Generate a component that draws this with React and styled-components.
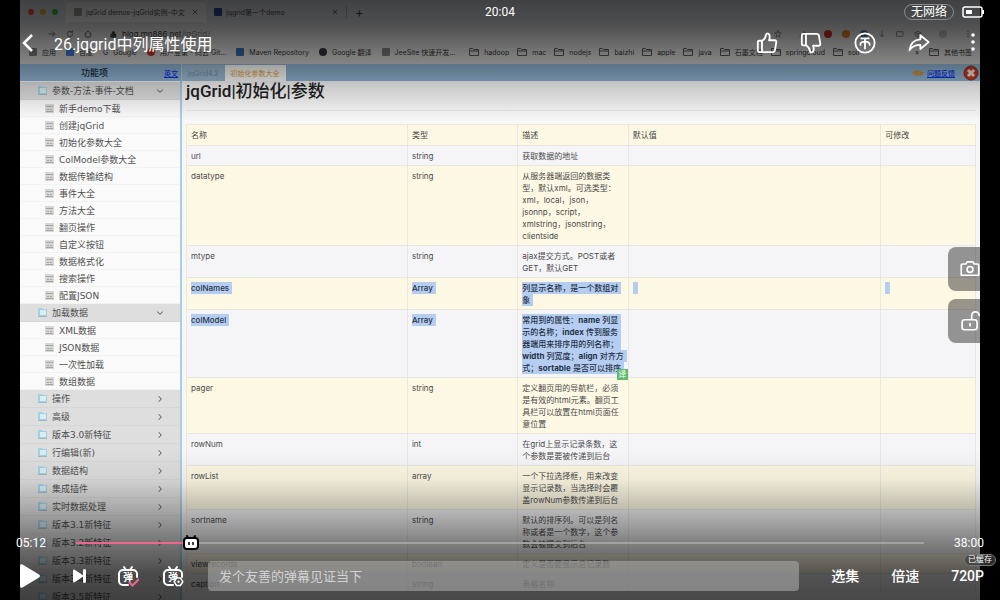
import React, { useState } from 'react';
import styled, { createGlobalStyle, css } from 'styled-components';

const GlobalStyle = createGlobalStyle`
  * {
    box-sizing: border-box;
  }
  body {
    margin: 0;
    background: #000;
    font-family: Inter, 'Noto Sans CJK SC', sans-serif;
  }
  button {
    padding: 0;
    border: 0;
    background: none;
    color: inherit;
    font: inherit;
    cursor: pointer;
  }
  a {
    color: inherit;
    text-decoration: none;
  }
  svg {
    display: block;
    flex: none;
  }
`;

const Player = styled.div`
  position: relative;
  height: 100vh;
  overflow: hidden;
  background: #000;
`;

const Video = styled.div`
  display: flex;
  flex-direction: column;
  height: 100%;
  margin: 0 20px;
  overflow: hidden;
  background: #f7f7f8;
`;

/* browser window inside the video */

const TabStrip = styled.div`
  display: flex;
  flex: none;
  align-items: center;
  height: 24px;
  padding-left: 8px;
  background: #c2c4c8;
  color: #444;
  font-size: 7px;
`;

const Lights = styled.div`
  display: flex;
  gap: 6px;
  margin-right: 8px;
`;

const Light = styled.span`
  width: 6px;
  height: 6px;
  border-radius: 50%;
  background: ${({ color }) => color};
`;

const BrowserTab = styled.div`
  display: flex;
  align-items: center;
  gap: 4px;
  width: 140px;
  height: 20px;
  padding: 0 8px;
  border-radius: 4px 4px 0 0;
  white-space: nowrap;
  ${({ $active }) =>
    $active &&
    css`
      background: #d4d4d5;
    `}
`;

const TabTitle = styled.span`
  flex: 1;
  overflow: hidden;
`;

const Favicon = styled.span`
  width: 8px;
  height: 8px;
  border-radius: ${({ $round }) => ($round ? '50%' : '1px')};
  background: ${({ color }) => color};
`;

const NewTab = styled.button`
  padding: 0 8px;
  border-left: 1px solid #999;
  font-size: 13px;
  line-height: 12px;
`;

const AddressBar = styled.div`
  display: flex;
  flex: none;
  align-items: center;
  height: 20px;
  padding: 0 8px 0 28px;
  background: linear-gradient(#c6c6c6, #d2d2d2);
  color: #333;
  font-size: 8px;
`;

const NavIcons = styled.div`
  display: flex;
  align-items: center;
  gap: 10px;
  margin-right: 18px;
  color: #666;
`;

const Url = styled.span`
  flex: 1;
  margin-left: 5px;
  span {
    color: #777;
  }
`;

const Extensions = styled.div`
  display: flex;
  align-items: center;
  gap: ${({ $wide }) => ($wide ? '17px' : '10px')};
  color: #555;
`;

const Bookmarks = styled.div`
  display: flex;
  flex: none;
  align-items: center;
  gap: 10px;
  height: 20px;
  padding: 0 8px 4px 9px;
  background: #d2d2d2;
  color: #333;
  font-size: 7px;
  white-space: nowrap;
`;

const Bookmark = styled.span`
  display: flex;
  align-items: center;
  gap: 5px;
`;

const Folders = styled.div`
  display: flex;
  flex: 1;
  gap: 8px;
  padding-left: 4px;
`;

/* documentation page */

const AppHeader = styled.div`
  display: flex;
  flex: none;
  align-items: flex-end;
  height: 17px;
  background: #90b4d4;
  font-size: 7px;
`;

const MenuTitle = styled.div`
  display: flex;
  align-items: center;
  justify-content: flex-end;
  gap: 56px;
  width: 162px;
  height: 17px;
  padding-right: 3px;
  border-right: 1px solid #b5d3e8;
  color: #1a2c3c;
  font-size: 9px;
  font-weight: 500;
`;

const HeaderLink = styled.a`
  color: #0a32e8;
  font-size: 7px;
  font-weight: 500;
  text-decoration: underline;
`;

const PageTab = styled.button`
  height: 16px;
  padding: 0 6px;
  background: ${({ $active }) => ($active ? '#fdfdfb' : '#9dbcd6')};
  color: ${({ $active }) => ($active ? '#dfa13c' : '#6f8ea8')};
  font-size: 7px;
`;

const Feedback = styled.div`
  display: flex;
  align-items: center;
  gap: 3px;
  height: 17px;
  margin-left: auto;
`;

const PageBody = styled.div`
  display: flex;
  flex: 1;
  min-height: 0;
`;

const Sidebar = styled.nav`
  flex: none;
  width: 162px;
  padding-top: 1px;
  border-right: 2px solid #a9cfe2;
  background: #fafafa;
  color: #505050;
  font-family: 'DejaVu Sans', 'Noto Sans CJK SC', sans-serif;
  font-size: 9px;
`;

const GroupHead = styled.button`
  display: flex;
  align-items: center;
  gap: 5px;
  width: 100%;
  height: 18px;
  padding: 0 17px 0 18px;
  border-bottom: 1px solid #d6d6d6;
  background: #dedede;
  text-align: left;
  span {
    flex: 1;
  }
`;

const MenuItem = styled.a`
  display: flex;
  align-items: center;
  gap: 5px;
  height: 17px;
  padding-left: 25px;
  border-bottom: 1px solid #f2f2f2;
`;

const Content = styled.main`
  flex: 1;
  min-width: 0;
  padding: 0 4px;
  overflow: hidden;
`;

const Heading = styled.h1`
  margin: 0;
  height: 30px;
  border-bottom: 1px solid #e6eaea;
  color: #222;
  font-family: Roboto, 'Noto Sans CJK SC', sans-serif;
  font-size: 17px;
  font-weight: 500;
  line-height: 20px;
`;

const Table = styled.table`
  width: 100%;
  margin-top: 13px;
  border-collapse: separate;
  border-spacing: 0;
  border-left: 1px solid #ece9dc;
  border-top: 1px solid #ece9dc;
  table-layout: fixed;
  color: #4a4a4a;
  font-size: 8px;
  line-height: 12px;
`;

const HeadCell = styled.th`
  width: ${({ width }) => width};
  padding: 4px;
  border-right: 1px solid #e9e7e0;
  color: #444;
  font-weight: 400;
  text-align: left;
`;

const Row = styled.tr`
  background: ${({ $odd }) => ($odd ? '#fdf8e3' : '#f5f5f7')};
`;

const Cell = styled.td`
  position: relative;
  padding: 4px 4px 3px;
  border-top: 1px solid #e9e7e0;
  border-right: 1px solid #e9e7e0;
  vertical-align: top;
  white-space: pre;
`;

const Selected = styled.mark`
  padding: 1px 3px 1px 0;
  background: #b5cdf0;
  color: #263248;
  font-weight: 500;
  -webkit-box-decoration-break: clone;
  box-decoration-break: clone;
`;

const Translate = styled.button`
  position: absolute;
  right: 0;
  bottom: -3px;
  z-index: 1;
  width: 11px;
  height: 11px;
  background: #5dbb6c;
  color: #fff;
  font-size: 8px;
  line-height: 11px;
`;

/* player controls */

const Shade = styled.div`
  position: absolute;
  left: 0;
  right: 0;
  pointer-events: none;
  ${({ $side }) =>
    $side === 'top'
      ? css`
          top: 0;
          height: 120px;
          background: linear-gradient(
            rgba(0, 0, 0, 0.67),
            rgba(0, 0, 0, 0.58) 25%,
            rgba(0, 0, 0, 0.36) 54%,
            rgba(0, 0, 0, 0.18) 72%,
            transparent
          );
        `
      : css`
          bottom: 0;
          height: 150px;
          background: linear-gradient(
            transparent,
            rgba(0, 0, 0, 0.06) 20%,
            rgba(0, 0, 0, 0.25) 40%,
            rgba(0, 0, 0, 0.48) 62%,
            rgba(0, 0, 0, 0.66) 82%,
            rgba(0, 0, 0, 0.71)
          );
        `}
`;

const TopControls = styled.header`
  position: absolute;
  top: 0;
  left: 0;
  right: 0;
  padding: 0 16px;
  color: #fff;
  font-family: Roboto, 'Noto Sans CJK SC', sans-serif;
`;

const StatusBar = styled.div`
  display: grid;
  grid-template-columns: 1fr auto 1fr;
  align-items: center;
  height: 24px;
  font-size: 12px;
`;

const StatusRight = styled.div`
  display: flex;
  align-items: center;
  justify-content: flex-end;
  gap: 8px;
`;

const NetworkPill = styled.span`
  height: 16px;
  padding: 0 6px;
  border: 1px solid #8a8a8a;
  border-radius: 8px;
  line-height: 14px;
`;

const TitleBar = styled.div`
  display: flex;
  align-items: center;
  height: 38px;
  padding-left: 6px;
`;

const VideoTitle = styled.h2`
  flex: 1;
  margin: 0 0 0 20px;
  font-size: 16px;
  font-weight: 400;
`;

const Actions = styled.div`
  display: flex;
  gap: ${({ gap }) => gap};
`;

const SideControls = styled.div`
  position: absolute;
  top: calc(50% - 53px);
  right: 8px;
  display: flex;
  flex-direction: column;
  gap: 8px;
`;

const SideButton = styled.button`
  display: flex;
  align-items: center;
  justify-content: center;
  width: 44px;
  height: 44px;
  border-radius: 8px;
  background: rgba(0, 0, 0, 0.4);
  color: #fff;
`;

const BottomControls = styled.footer`
  position: absolute;
  left: 0;
  right: 0;
  bottom: 0;
  display: flex;
  flex-direction: column;
  gap: 9px;
  padding: 0 16px 9px;
  color: #fff;
  font-family: Roboto, 'Noto Sans CJK SC', sans-serif;
`;

const ProgressRow = styled.div`
  display: flex;
  align-items: center;
  gap: 30px;
  height: 18px;
  font-size: 12px;
`;

const Seek = styled.div`
  position: relative;
  flex: 1;
  height: 18px;
`;

const Range = styled.input`
  display: block;
  width: 100%;
  height: 18px;
  margin: 0;
  appearance: none;
  background: linear-gradient(#ee6590, #ee6590) left center no-repeat,
    linear-gradient(#a2a2a4, #a2a2a4) center no-repeat;
  &::-webkit-slider-thumb {
    appearance: none;
    width: 16px;
    height: 16px;
    opacity: 0;
  }
`;

const Thumb = styled.span`
  position: absolute;
  top: 0;
  margin-left: -10px;
  pointer-events: none;
`;

const ControlRow = styled.div`
  display: flex;
  align-items: center;
  gap: 32px;
  height: 30px;
  padding-left: 4px;
`;

const DanmuGroup = styled.div`
  display: flex;
  flex: 1;
  align-items: center;
  gap: 24px;
`;

const DanmuInput = styled.input`
  flex: 1;
  min-width: 0;
  height: 30px;
  padding: 0 11px;
  border: 0;
  border-radius: 4px;
  outline: none;
  background: rgba(170, 170, 170, 0.6);
  color: #fff;
  font-family: inherit;
  font-size: 13px;
  &::placeholder {
    color: #d2d2d2;
  }
`;

const TextButton = styled.button`
  position: relative;
  font-size: 14px;
  font-weight: 500;
  line-height: 20px;
`;

const CacheBadge = styled.span`
  position: absolute;
  top: -12px;
  right: -12px;
  padding: 0 3px;
  border: 1px solid #777;
  border-radius: 6px;
  background: rgba(60, 60, 60, 0.7);
  font-size: 8px;
  font-weight: 400;
  line-height: 10px;
  white-space: nowrap;
`;

const sites = [
  { name: '应用', color: '#777' },
  { name: '百度', color: '#3d72c8' },
  { name: 'Google', letter: 'G' },
  { name: '用户登录 - 码云 Git...', color: '#c2332c', round: true },
  { name: 'Maven Repository', color: '#3566a8' },
  { name: 'Google 翻译', color: '#333', round: true },
  { name: 'JeeSite 快速开发...', color: '#777' },
];

const folders = ['hadoop', 'mac', 'nodejs', 'baizhi', 'apple', 'java', '石墨文档', 'springcloud', 'soir'];

const menu = [
  {
    name: '参数-方法-事件-文档',
    items: [
      '新手demo下载',
      '创建jqGrid',
      '初始化参数大全',
      'ColModel参数大全',
      '数据传输结构',
      '事件大全',
      '方法大全',
      '翻页操作',
      '自定义按钮',
      '数据格式化',
      '搜索操作',
      '配置JSON',
    ],
  },
  { name: '加载数据', items: ['XML数据', 'JSON数据', '一次性加载', '数组数据'] },
  { name: '操作' },
  { name: '高级' },
  { name: '版本3.0新特征' },
  { name: '行编辑(新)' },
  { name: '数据结构' },
  { name: '集成插件' },
  { name: '实时数据处理' },
  { name: '版本3.1新特征' },
  { name: '版本3.2新特征' },
  { name: '版本3.3新特征' },
  { name: '版本3.4新特征' },
  { name: '版本3.5新特征' },
];

const rows = [
  { name: 'url', type: 'string', desc: '获取数据的地址' },
  {
    name: 'datatype',
    type: 'string',
    desc: '从服务器端返回的数据类\n型，默认xml。可选类型：\nxml，local，json，\njsonnp，script，\nxmlstring，jsonstring，\nclientside',
  },
  { name: 'mtype', type: 'string', desc: 'ajax提交方式。POST或者\nGET，默认GET' },
  { name: 'colNames', type: 'Array', desc: '列显示名称，是一个数组对\n象', selected: true, blanks: true },
  {
    name: 'colModel',
    type: 'Array',
    desc: (
      <>
        常用到的属性：<b>name</b> 列显{'\n'}示的名称；<b>index</b> 传到服务{'\n'}
        器端用来排序用的列名称；{'\n'}
        <b>width</b> 列宽度；<b>align</b> 对齐方{'\n'}式；<b>sortable</b> 是否可以排序
      </>
    ),
    selected: true,
    translate: true,
  },
  {
    name: 'pager',
    type: 'string',
    desc: '定义翻页用的导航栏，必须\n是有效的html元素。翻页工\n具栏可以放置在html页面任\n意位置',
  },
  { name: 'rowNum', type: 'int', desc: '在grid上显示记录条数，这\n个参数是要被传递到后台' },
  {
    name: 'rowList',
    type: 'array',
    desc: '一个下拉选择框，用来改变\n显示记录数，当选择时会覆\n盖rowNum参数传递到后台',
  },
  {
    name: 'sortname',
    type: 'string',
    desc: '默认的排序列。可以是列名\n称或者是一个数字，这个参\n数会被提交到后台',
  },
  { name: 'viewrecords', type: 'boolean', desc: '定义是否要显示总记录数' },
  { name: 'caption', type: 'string', desc: '表格名称' },
];

const Line = ({ size = 22, width = 2, children }) => (
  <svg
    width={size}
    height={size}
    viewBox="0 0 24 24"
    fill="none"
    stroke="currentColor"
    strokeWidth={width}
    strokeLinecap="round"
    strokeLinejoin="round"
    aria-hidden="true"
  >
    {children}
  </svg>
);

const CloseIcon = () => (
  <Line size={6} width={3}>
    <path d="M4 4l16 16M20 4L4 20" />
  </Line>
);

const FolderIcon = () => (
  <svg width="10" height="8" viewBox="0 0 10 8" fill="none" stroke="#555" aria-hidden="true">
    <path d="M.5 7.5v-7h3l1 1h5v6zM.5 3h9" />
  </svg>
);

const GroupIcon = () => (
  <svg width="9" height="9" viewBox="0 0 9 9" aria-hidden="true">
    <path d="M0 0h4l1 1h4v7H0z" fill="#9fd3e4" />
    <path d="M2 2h6v5H2z" fill="#dcecf1" />
    <path d="M0 8h9v1H0z" fill="#a7b9c0" />
  </svg>
);

const PageIcon = () => (
  <svg width="9" height="9" viewBox="0 0 9 9" aria-hidden="true">
    <path d="M0 0h9v9H0z" fill="#d6d6d6" />
    <path d="M1 2h7v1H1zM2 5h2v1H2zM5 5h2v1H5zM1 7h7v1H1z" fill="#a4a4a4" />
  </svg>
);

const ThumbShape = () => (
  <>
    <path d="M6.5 9.5h-3A1.5 1.5 0 0 0 2 11v9.5A1.5 1.5 0 0 0 3.5 22h3z" />
    <path d="M6.5 9.5C9.5 8 10.600 5.5 11 2.800 11.3 1 15 1.200 15 5c0 1.5-.3 2.800-.8 4h6c1.5 0 2.100 1 1.900 2.300l-1.400 8.500c-.3 1.500-1.200 2.200-2.600 2.200H6.5" />
  </>
);

const TvIcon = ({ children }) => (
  <svg width="21" height="22" viewBox="0 0 21 22" fill="none" stroke="#fff" strokeLinecap="round" aria-hidden="true">
    <path d="M6 2l2 3M14 2l-2 3" strokeWidth="2" />
    <path d="M19 12V9a4 4 0 0 0-4-4H5a4 4 0 0 0-4 4v7a4 4 0 0 0 4 4h5" strokeWidth="2" />
    <text
      x="10"
      y="16"
      textAnchor="middle"
      fill="#fff"
      stroke="none"
      fontSize="10"
      fontWeight="700"
      fontFamily="'Noto Sans CJK SC', sans-serif"
    >
      弹
    </text>
    {children}
  </svg>
);

const BrowserChrome = () => (
  <>
    <TabStrip>
      <Lights>
        <Light color="#e0443e" />
        <Light color="#c99a26" />
        <Light color="#2fa83a" />
      </Lights>
      <BrowserTab $active>
        <Favicon color="#8a8a80" />
        <TabTitle>jqGrid demos-jqGrid实例-中文</TabTitle>
        <CloseIcon />
      </BrowserTab>
      <BrowserTab>
        <Favicon color="#27418c" />
        <TabTitle>jqgrid第一个demo</TabTitle>
        <CloseIcon />
      </BrowserTab>
      <NewTab aria-label="新标签页">+</NewTab>
    </TabStrip>
    <AddressBar>
      <NavIcons>
        <Line size={8} width={3}>
          <path d="M3 12h18M13 5l8 7-8 7" />
        </Line>
        <Line size={8} width={3}>
          <path d="M20 12a8 8 0 1 1-2-5.5M19 2v5h-5" />
        </Line>
        <Line size={8} width={3}>
          <path d="M2 12L12 3l10 9M5 10v11h14V10" />
        </Line>
      </NavIcons>
      <Line size={7} width={3}>
        <path d="M4 11h16v10H4zM8 11V6a4 4 0 0 1 8 0v5" fill="#444" />
      </Line>
      <Url>
        blog.mn886.net<span>/jqGrid/</span>
      </Url>
      <Extensions $wide>
        <Line size={8}>
          <path d="M12 2l3 7h7l-6 5 2 8-6-5-6 5 2-8-6-5h7z" />
        </Line>
        <Line size={8}>
          <path d="M3 20c1-8 6-11 15-11M13 4l6 5-6 5" />
        </Line>
        <Extensions>
          <Favicon color="#b02a20" $round />
          <Favicon color="#c77222" $round />
          <Favicon color="#466e96" $round />
          <Line size={8}>
            <path d="M12 3v17M7 15l5 5 5-5" />
          </Line>
          <Line size={8}>
            <path d="M3 5h18v14H3z" />
          </Line>
          <Line size={8}>
            <path d="M4 8l8-4 8 4v9l-8 4-8-4zM4 8l8 4 8-4M12 12v9" />
          </Line>
        </Extensions>
        <Favicon color="#aaa" $round />
        <Line size={8} width={4}>
          <path d="M12 4v0M12 12v0M12 20v0" />
        </Line>
      </Extensions>
    </AddressBar>
    <Bookmarks>
      {sites.map(({ name, color, round, letter }) => (
        <Bookmark key={name}>
          {letter ? <span>{letter}</span> : <Favicon color={color} $round={round} />}
          {name}
        </Bookmark>
      ))}
      <Folders>
        {folders.map((name) => (
          <Bookmark key={name}>
            <FolderIcon />
            {name}
          </Bookmark>
        ))}
      </Folders>
      <span>»</span>
      <Bookmark>
        <FolderIcon />
        其他书签
      </Bookmark>
    </Bookmarks>
  </>
);

const DocRow = ({ row, odd }) => {
  const wrap = (text) => (row.selected ? <Selected>{text}</Selected> : text);
  return (
    <Row $odd={odd}>
      <Cell>{wrap(row.name)}</Cell>
      <Cell>{wrap(row.type)}</Cell>
      <Cell>
        {wrap(row.desc)}
        {row.translate && <Translate>译</Translate>}
      </Cell>
      <Cell>{row.blanks && <Selected> </Selected>}</Cell>
      <Cell>{row.blanks && <Selected> </Selected>}</Cell>
    </Row>
  );
};

const DocPage = () => (
  <>
    <AppHeader>
      <MenuTitle>
        功能项
        <HeaderLink href="#en">英文</HeaderLink>
      </MenuTitle>
      <PageTab>jqGrid4.2</PageTab>
      <PageTab $active>初始化参数大全</PageTab>
      <Feedback>
        <svg width="12" height="6" viewBox="0 0 12 6" aria-hidden="true">
          <path d="M0 3l4-3 8 2-1 3-7 1z" fill="#c9924a" />
        </svg>
        <HeaderLink href="#feedback">问题反馈</HeaderLink>
        <svg width="22" height="16" viewBox="0 0 22 16" aria-hidden="true">
          <circle cx="13" cy="8" r="7" fill="#c23a22" stroke="#8d2a1a" />
          <path d="M10 5l6 6M16 5l-6 6" stroke="#f1e4dc" strokeWidth="3" />
        </svg>
      </Feedback>
    </AppHeader>
    <PageBody>
      <Sidebar>
        {menu.map(({ name, items }) => (
          <React.Fragment key={name}>
            <GroupHead>
              <GroupIcon />
              <span>{name}</span>
              <Line size={6} width={4}>
                <path d={items ? 'M2 8l10 9 10-9' : 'M8 2l9 10-9 10'} />
              </Line>
            </GroupHead>
            {items &&
              items.map((item) => (
                <MenuItem key={item} href="#doc">
                  <PageIcon />
                  {item}
                </MenuItem>
              ))}
          </React.Fragment>
        ))}
      </Sidebar>
      <Content>
        <Heading>jqGrid|初始化|参数</Heading>
        <Table>
          <thead>
            <Row $odd>
              <HeadCell width="28%">名称</HeadCell>
              <HeadCell width="14%">类型</HeadCell>
              <HeadCell width="14%">描述</HeadCell>
              <HeadCell width="32%">默认值</HeadCell>
              <HeadCell width="12%">可修改</HeadCell>
            </Row>
          </thead>
          <tbody>
            {rows.map((row, i) => (
              <DocRow key={row.name} row={row} odd={i % 2 === 1} />
            ))}
          </tbody>
        </Table>
      </Content>
    </PageBody>
  </>
);

const App = () => {
  const [position, setPosition] = useState(312);
  const [danmu, setDanmu] = useState('');
  const duration = 2280;
  const percent = `${(position / duration) * 100}%`;
  const clock = (s) =>
    `${String(Math.floor(s / 60)).padStart(2, '0')}:${String(s % 60).padStart(2, '0')}`;

  return (
    <Player>
      <GlobalStyle />
      <Video>
        <BrowserChrome />
        <DocPage />
      </Video>
      <Shade $side="top" />
      <Shade $side="bottom" />

      <TopControls>
        <StatusBar>
          <span />
          <span>20:04</span>
          <StatusRight>
            <NetworkPill>无网络</NetworkPill>
            <svg width="22" height="12" viewBox="0 0 22 12" aria-hidden="true">
              <rect x="1" y="1" width="19" height="10" rx="2" fill="none" stroke="#fff" strokeWidth="1.5" />
              <path d="M4 4h6v4H4zM20 4h2v4h-2z" fill="#fff" />
            </svg>
          </StatusRight>
        </StatusBar>
        <TitleBar>
          <button aria-label="返回">
            <svg width="12" height="20" viewBox="0 0 12 20" fill="none" stroke="#fff" strokeWidth="2.5" aria-hidden="true">
              <path d="M10 2l-8 8 8 8" />
            </svg>
          </button>
          <VideoTitle>26.jqgrid中列属性使用</VideoTitle>
          <Actions gap="32px">
            <Actions gap="22px">
              <button aria-label="点赞">
                <Line>
                  <ThumbShape />
                </Line>
              </button>
              <button aria-label="不喜欢">
                <Line>
                  <g transform="matrix(1 0 0 -1 0 24)">
                    <ThumbShape />
                  </g>
                </Line>
              </button>
            </Actions>
            <button aria-label="投币">
              <Line>
                <circle cx="12" cy="12" r="10.5" />
                <path d="M8 7h8M12 7v11M7 14v-.5c0-4 10-4 10 0v.5" />
              </Line>
            </button>
            <button aria-label="分享">
              <Line>
                <path d="M13.5 3.5l9 7.500-9 7.500V14C8 14 4.500 15.500 1.500 20 2.500 13 6.500 8.500 13.500 8z" />
              </Line>
            </button>
            <button aria-label="更多">
              <svg width="22" height="22" viewBox="0 0 22 22" fill="#fff" aria-hidden="true">
                <circle cx="11" cy="3" r="1.8" />
                <circle cx="11" cy="10" r="1.8" />
                <circle cx="11" cy="17" r="1.8" />
              </svg>
            </button>
          </Actions>
        </TitleBar>
      </TopControls>

      <SideControls>
        <SideButton aria-label="截图">
          <Line size={20}>
            <path d="M3 6h4l1.500-2.500h7L17 6h4a1.500 1.500 0 0 1 1.500 1.500v12H1.500v-12A1.500 1.500 0 0 1 3 6z" />
            <circle cx="12" cy="12.5" r="3.5" />
          </Line>
        </SideButton>
        <SideButton aria-label="锁定">
          <Line size={20}>
            <rect x="2.500" y="10.500" width="18" height="12" rx="3" />
            <path d="M14 10V5.500a4.500 4.500 0 0 1 9 0M12 15v3" />
          </Line>
        </SideButton>
      </SideControls>

      <BottomControls>
        <ProgressRow>
          <span>{clock(position)}</span>
          <Seek>
            <Range
              type="range"
              aria-label="播放进度"
              min="0"
              max={duration}
              value={position}
              onChange={(e) => setPosition(Number(e.target.value))}
              style={{ backgroundSize: `${percent} 2px, 100% 2px` }}
            />
            <Thumb style={{ left: percent }}>
              <svg width="18" height="18" viewBox="0 0 18 18" aria-hidden="true">
                <path d="M5 2l2 3M13 2l-2 3" stroke="#000" strokeWidth="2" strokeLinecap="round" />
                <rect x="2" y="4" width="14" height="11" rx="3" fill="#fff" stroke="#000" strokeWidth="2" />
                <path d="M7 8v3M11 8v3" stroke="#000" strokeWidth="1.500" />
              </svg>
            </Thumb>
          </Seek>
          <span>{clock(duration)}</span>
        </ProgressRow>
        <ControlRow>
          <button aria-label="播放">
            <svg width="20" height="24" viewBox="0 0 20 24" fill="#fff" aria-hidden="true">
              <path d="M0 2C0 .4 1.200-.2 2.500.6l16.500 10c1.300.8 1.300 2 0 2.800l-16.500 10C1.200 24.200 0 23.600 0 22z" />
            </svg>
          </button>
          <button aria-label="下一个">
            <svg width="14" height="14" viewBox="0 0 14 14" fill="#fff" aria-hidden="true">
              <path d="M1 1.500C1 .5 1.800.2 2.600.8L11 6.200V1.500a1.500 1.500 0 0 1 3 0v11a1.500 1.500 0 0 1-3 0V7.800l-8.400 5.400c-.8.6-1.600.3-1.600-.7z" />
            </svg>
          </button>
          <DanmuGroup>
            <button aria-label="弹幕开关">
              <TvIcon>
                <path d="M11.500 17.500l3 3 6-6" stroke="#ee6590" strokeWidth="2" />
              </TvIcon>
            </button>
            <button aria-label="弹幕设置">
              <TvIcon>
                <path d="M13.500 13h4l2.300 3.700-2.300 3.700h-4l-2.300-3.700z" fill="#4c4c4c" strokeWidth="1.500" />
                <circle cx="15.500" cy="16.700" r="1.200" fill="#fff" stroke="none" />
              </TvIcon>
            </button>
            <DanmuInput
              type="text"
              aria-label="弹幕"
              placeholder="发个友善的弹幕见证当下"
              value={danmu}
              onChange={(e) => setDanmu(e.target.value)}
            />
          </DanmuGroup>
          <TextButton>选集</TextButton>
          <TextButton>倍速</TextButton>
          <TextButton>
            720P
            <CacheBadge>已缓存</CacheBadge>
          </TextButton>
        </ControlRow>
      </BottomControls>
    </Player>
  );
};

export default App;
